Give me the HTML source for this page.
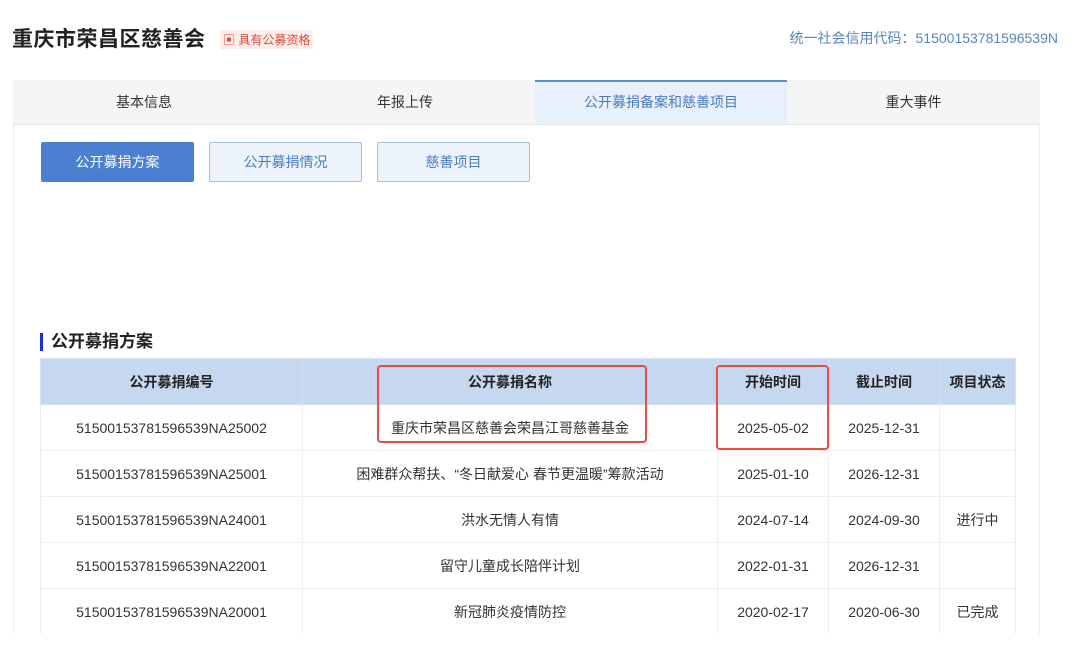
<!DOCTYPE html>
<html><head><meta charset="utf-8"><style>
*{margin:0;padding:0;box-sizing:border-box}
body{width:1080px;height:662px;background:#fff;font-family:"Liberation Sans","Noto Sans CJK SC",sans-serif;position:relative;overflow:hidden;color:#333}
.abs{position:absolute}
.title{left:12px;top:23px;font-size:21px;font-weight:bold;color:#222;letter-spacing:0.5px}
.badge{left:220px;top:30px;font-size:12px;color:#e04a3a;background:#fdeeea;padding:1px 3px}
.code{right:22px;top:28px;font-size:14px;color:#5a84bf}
.panel{left:13px;top:80px;width:1027px;height:554px;border:1px solid #e8ebf0;border-bottom:none}
.tabs{left:13px;top:80px;width:1027px;height:45px;background:#f4f5f7;display:flex;border-bottom:1px solid #e4e7ec}
.tab{text-align:center;line-height:45px;font-size:14px;color:#333}
.tab.on{background:#e8f0fb;color:#4a7cc0;border-top:2px solid #5b8bd0;line-height:41px}
.btn{top:142px;height:40px;width:153px;text-align:center;line-height:38px;font-size:14px;border:1px solid #a8bfdc;background:#edf3fb;color:#4a7cc0;border-radius:2px}
.btn.on{background:#4a7fd2;color:#fff;border-color:#4a7fd2}
.sec{left:40px;top:333px;font-size:17px;font-weight:bold;color:#222;padding-left:8px;border-left:3px solid #1a2fd8;line-height:18px}
table{position:absolute;left:40px;top:358px;border-collapse:collapse;font-size:14px;color:#333}
td,th{text-align:center;height:46px;border:1px solid #eceef2}
th{background:#c6d8f0;font-weight:bold;color:#222;border-color:#d4e0f2}
.rb{border:2px solid #e0513f;border-radius:4px}
</style></head><body>
<div class="abs title">重庆市荣昌区慈善会</div>
<div class="abs badge">▣ 具有公募资格</div>
<div class="abs code">统一社会信用代码：51500153781596539N</div>
<div class="abs panel"></div>
<div class="abs tabs"><div class="tab" style="width:262px">基本信息</div><div class="tab" style="width:260px">年报上传</div><div class="tab on" style="width:252px">公开募捐备案和慈善项目</div><div class="tab" style="width:253px">重大事件</div></div>
<div class="abs btn on" style="left:41px">公开募捐方案</div>
<div class="abs btn" style="left:209px">公开募捐情况</div>
<div class="abs btn" style="left:377px">慈善项目</div>
<div class="abs sec">公开募捐方案</div>
<table>
<tr><th style="width:262px">公开募捐编号</th><th style="width:415px">公开募捐名称</th><th style="width:111px">开始时间</th><th style="width:111px">截止时间</th><th style="width:76px">项目状态</th></tr>
<tr><td>51500153781596539NA25002</td><td>重庆市荣昌区慈善会荣昌江哥慈善基金</td><td>2025-05-02</td><td>2025-12-31</td><td></td></tr>
<tr><td>51500153781596539NA25001</td><td>困难群众帮扶、“冬日献爱心 春节更温暖”筹款活动</td><td>2025-01-10</td><td>2026-12-31</td><td></td></tr>
<tr><td>51500153781596539NA24001</td><td>洪水无情人有情</td><td>2024-07-14</td><td>2024-09-30</td><td>进行中</td></tr>
<tr><td>51500153781596539NA22001</td><td>留守儿童成长陪伴计划</td><td>2022-01-31</td><td>2026-12-31</td><td></td></tr>
<tr><td>51500153781596539NA20001</td><td>新冠肺炎疫情防控</td><td>2020-02-17</td><td>2020-06-30</td><td>已完成</td></tr>
</table>
<div class="abs" style="left:0;top:634px;width:1080px;height:28px;background:#fff"></div>
<div class="abs rb" style="left:377px;top:365px;width:270px;height:78px"></div>
<div class="abs rb" style="left:716px;top:365px;width:113px;height:85px"></div>
</body></html>
